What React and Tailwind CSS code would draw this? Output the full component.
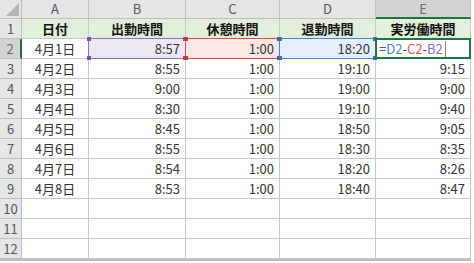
import React from "react";

const cols = ["A", "B", "C", "D", "E"];
const rows = [
  ["4月1日", "8:57", "1:00", "18:20", null],
  ["4月2日", "8:55", "1:00", "19:10", "9:15"],
  ["4月3日", "9:00", "1:00", "19:00", "9:00"],
  ["4月4日", "8:30", "1:00", "19:10", "9:40"],
  ["4月5日", "8:45", "1:00", "18:50", "9:05"],
  ["4月6日", "8:55", "1:00", "18:30", "8:35"],
  ["4月7日", "8:54", "1:00", "18:20", "8:26"],
  ["4月8日", "8:53", "1:00", "18:40", "8:47"],
];

const font = { fontFamily: '"Noto Sans CJK JP", "Noto Sans", sans-serif' };

const Handle = ({ pos, color }) => (
  <span className={`absolute w-[4px] h-[4px] ${pos} ${color}`} />
);

const RefCell = ({ value, border, bg, handle }) => (
  <div className={`relative flex items-center justify-end pr-[5px] border-b border-r border-[#c8c8c8] ${bg}`}>
    <div className={`absolute inset-[-1px] border ${border} pointer-events-none`} />
    <Handle pos="left-[-2px] top-[-2px]" color={handle} />
    <Handle pos="right-[-2px] top-[-2px]" color={handle} />
    <Handle pos="left-[-2px] bottom-[-2px]" color={handle} />
    <Handle pos="right-[-2px] bottom-[-2px]" color={handle} />
    <span className="relative">{value}</span>
  </div>
);

export default function App() {
  return (
    <div className="w-[474px] h-[263px] bg-white overflow-hidden text-[13px] text-[#333]" style={font}>
      <div className="grid grid-cols-[22px_67px_97px_94px_96px_95px] grid-rows-[19px_repeat(12,20px)] border-b-2 border-[#bdbdbd] w-[471px]">
        {/* corner */}
        <div className="relative bg-[#e6e6e6] border-r border-b border-[#bebebe]">
          <svg className="absolute right-[2px] bottom-[2px]" width="13" height="13" viewBox="0 0 13 13">
            <polygon points="13,0 13,13 0,13" fill="#b4b4b4" />
          </svg>
        </div>
        {cols.map((c) =>
          c === "E" ? (
            <div key={c} className="flex items-center justify-center bg-[#d3d3d3] border-r border-[#bebebe] border-b-2 border-b-[#217346] text-[#5b6b60]">
              {c}
            </div>
          ) : (
            <div key={c} className="flex items-center justify-center bg-[#e6e6e6] border-r border-b border-[#bebebe] text-[#555]">
              {c}
            </div>
          )
        )}

        {/* row 1 */}
        <div className="flex items-center justify-center bg-[#e6e6e6] border-r border-b border-[#bebebe] text-[#555]">1</div>
        {["日付", "出勤時間", "休憩時間", "退勤時間", "実労働時間"].map((h) => (
          <div key={h} className="flex items-center justify-center bg-[#e2efda] border-r border-b border-[#c8c8c8] font-bold text-[#111]">
            {h}
          </div>
        ))}

        {/* row 2 */}
        <div className="flex items-center justify-center bg-[#d3d3d3] border-b border-[#bebebe] border-r-2 border-r-[#217346] text-[#5b6b60]">2</div>
        <div className="flex items-center justify-center border-r border-b border-[#c8c8c8]">4月1日</div>
        <RefCell value="8:57" border="border-[#8e6cc4]" bg="bg-[#ece8f6]" handle="bg-[#7a4fbf]" />
        <RefCell value="1:00" border="border-[#d24b4b]" bg="bg-[#fbe6e6]" handle="bg-[#c73a3a]" />
        <RefCell value="18:20" border="border-[#4a7fd0]" bg="bg-[#e5eef9]" handle="bg-[#3a6fc4]" />
        <div className="relative flex items-center pl-[3px] border-b border-r border-[#c8c8c8]">
          <div className="absolute inset-[-1px] border-2 border-[#217346]" />
          <span className="relative">
            <span className="text-[#333]">=</span>
            <span className="text-[#4a7fd0]">D2</span>
            <span className="text-[#333]">-</span>
            <span className="text-[#d0584f]">C2</span>
            <span className="text-[#333]">-</span>
            <span className="text-[#8e6cc4]">B2</span>
          </span>
          <span className="relative w-px h-[16px] bg-[#888] ml-[2px]" />
        </div>

        {/* rows 3..9 */}
        {rows.slice(1).map((r, i) => (
          <React.Fragment key={i}>
            <div className="flex items-center justify-center bg-[#e6e6e6] border-r border-b border-[#bebebe] text-[#555]">{i + 3}</div>
            <div className="flex items-center justify-center border-r border-b border-[#c8c8c8]">{r[0]}</div>
            {r.slice(1).map((v, j) => (
              <div key={j} className="flex items-center justify-end pr-[5px] border-r border-b border-[#c8c8c8]">{v}</div>
            ))}
          </React.Fragment>
        ))}

        {/* rows 10..12 */}
        {[10, 11, 12].map((n) => (
          <React.Fragment key={n}>
            <div className="flex items-center justify-center bg-[#e6e6e6] border-r border-b border-[#bebebe] text-[#555]">{n}</div>
            {cols.map((c) => (
              <div key={c} className="border-r border-b border-[#c8c8c8]" />
            ))}
          </React.Fragment>
        ))}
      </div>
    </div>
  );
}
